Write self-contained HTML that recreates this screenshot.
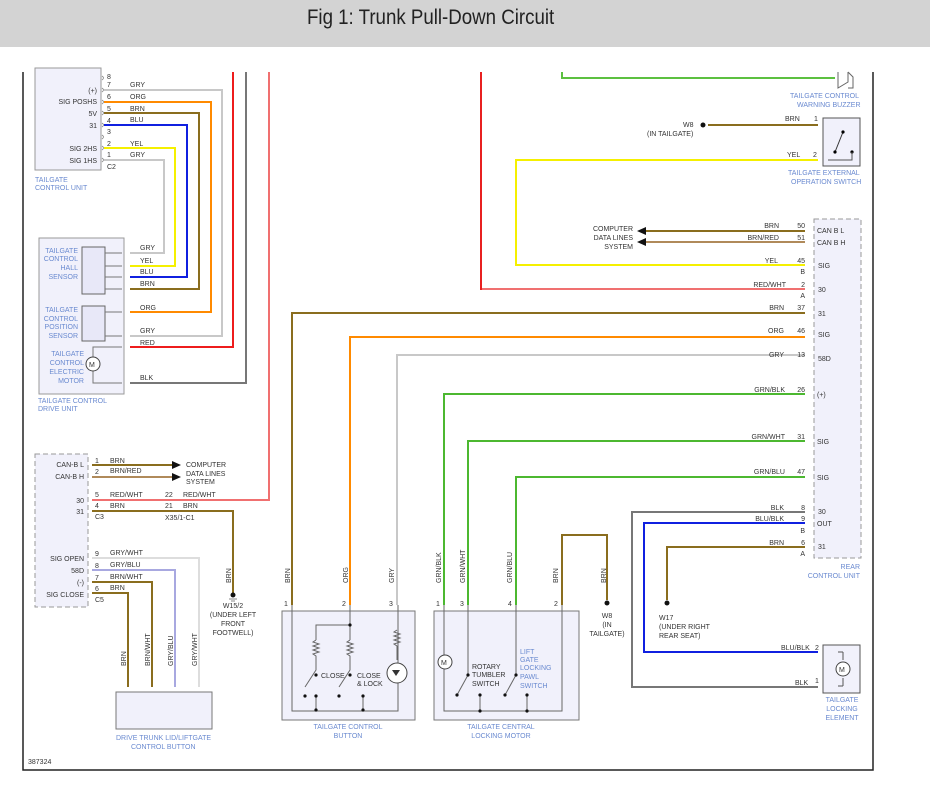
<!DOCTYPE html>
<html><head><meta charset="utf-8"><style>
html,body{margin:0;padding:0;background:#fff;width:930px;height:802px;overflow:hidden}
.hdr{position:absolute;left:0;top:0;width:930px;height:47px;background:#d3d3d3}
.hdr span{position:absolute;left:307px;top:6px;font:21px "Liberation Sans Narrow","Liberation Sans",sans-serif;color:#222;transform:scaleX(.89);transform-origin:left}
svg{position:absolute;left:0;top:0}
text{font-family:"Liberation Sans",sans-serif;font-size:7px;fill:#333}
.b{fill:#6a8ad0}
.w{fill:none;stroke-width:2}
.g{fill:none;stroke:#777;stroke-width:1}
</style></head><body>
<div class="hdr"><span>Fig 1: Trunk Pull-Down Circuit</span></div>
<svg width="930" height="802" viewBox="0 0 930 802">
<path d="M23 72V770H873V72" fill="none" stroke="#222" stroke-width="1.5"/>
<rect x="35" y="68" width="66" height="102" fill="#f1f1fb" stroke="#999"/>
<g text-anchor="end"><text x="97" y="93">(+)</text><text x="97" y="104">SIG POSHS</text><text x="97" y="116">5V</text><text x="97" y="128">31</text><text x="97" y="151">SIG 2HS</text><text x="97" y="163">SIG 1HS</text></g>
<g><text x="107" y="79">8</text><text x="107" y="87">7</text><text x="107" y="99">6</text><text x="107" y="111">5</text><text x="107" y="123">4</text><text x="107" y="134">3</text><text x="107" y="146">2</text><text x="107" y="157">1</text><text x="107" y="169">C2</text>
<text x="130" y="87">GRY</text><text x="130" y="99">ORG</text><text x="130" y="111">BRN</text><text x="130" y="122">BLU</text><text x="130" y="146">YEL</text><text x="130" y="157">GRY</text></g>
<g fill="none" stroke="#888" stroke-width=".8"><path d="M102 76q3 2 0 4M102 88q3 2 0 4M102 100q3 2 0 4M102 111q3 2 0 4M102 123q3 2 0 4M102 135q3 2 0 4M102 146q3 2 0 4M102 158q3 2 0 4"/></g>
<text class="b" x="35" y="182">TAILGATE</text><text class="b" x="35" y="190">CONTROL UNIT</text>
<path class="w" stroke="#c8c8c8" d="M104 90H222V336H130"/>
<path class="w" stroke="#ff8a00" d="M104 102H211V312H130"/>
<path class="w" stroke="#8a6d1e" d="M104 113H199V289H130"/>
<path class="w" stroke="#1020e0" d="M104 125H187V277H130"/>
<path class="w" stroke="#f5f000" d="M104 148H175V266H130"/>
<path class="w" stroke="#c8c8c8" d="M104 160H164V253H130"/>
<path class="w" stroke="#ee1c1c" d="M233 72V347H130"/>
<path class="w" stroke="#777" d="M246 72V383H130"/>
<path class="w" stroke="#f07070" d="M269 72V500H92"/>
<rect x="39" y="238" width="85" height="156" fill="#f1f1fb" stroke="#999"/>
<rect x="82" y="247" width="23" height="47" fill="#e8e8f8" stroke="#666"/>
<rect x="82" y="306" width="23" height="35" fill="#e8e8f8" stroke="#666"/>
<g class="g"><path d="M105 253H122M105 266H122M105 277H122M105 289H122M105 312H122M105 336H122M93 357V347H122M93 371V383H122"/></g>
<circle cx="93" cy="364" r="7" fill="#fff" stroke="#444"/><text x="89" y="367" font-size="8">M</text>
<g text-anchor="end" class="b"><text class="b" x="78" y="253">TAILGATE</text><text class="b" x="78" y="261">CONTROL</text><text class="b" x="78" y="270">HALL</text><text class="b" x="78" y="279">SENSOR</text>
<text class="b" x="78" y="312">TAILGATE</text><text class="b" x="78" y="321">CONTROL</text><text class="b" x="78" y="329">POSITION</text><text class="b" x="78" y="338">SENSOR</text>
<text class="b" x="84" y="356">TAILGATE</text><text class="b" x="84" y="365">CONTROL</text><text class="b" x="84" y="374">ELECTRIC</text><text class="b" x="84" y="383">MOTOR</text></g>
<g><text x="140" y="250">GRY</text><text x="140" y="263">YEL</text><text x="140" y="274">BLU</text><text x="140" y="286">BRN</text><text x="140" y="310">ORG</text><text x="140" y="333">GRY</text><text x="140" y="345">RED</text><text x="140" y="380">BLK</text></g>
<text class="b" x="38" y="403">TAILGATE CONTROL</text><text class="b" x="38" y="411">DRIVE UNIT</text>
<rect x="35" y="454" width="53" height="153" fill="#f1f1fb" stroke="#999" stroke-dasharray="5 3"/>
<g text-anchor="end"><text x="84" y="467">CAN-B L</text><text x="84" y="479">CAN-B H</text><text x="84" y="503">30</text><text x="84" y="514">31</text><text x="84" y="561">SIG OPEN</text><text x="84" y="573">58D</text><text x="84" y="585">(-)</text><text x="84" y="597">SIG CLOSE</text></g>
<g><text x="95" y="463">1</text><text x="95" y="474">2</text><text x="95" y="497">5</text><text x="95" y="508">4</text><text x="95" y="519">C3</text><text x="95" y="556">9</text><text x="95" y="568">8</text><text x="95" y="580">7</text><text x="95" y="591">6</text><text x="95" y="602">C5</text>
<text x="110" y="463">BRN</text><text x="110" y="473">BRN/RED</text><text x="110" y="497">RED/WHT</text><text x="110" y="508">BRN</text><text x="110" y="555">GRY/WHT</text><text x="110" y="567">GRY/BLU</text><text x="110" y="579">BRN/WHT</text><text x="110" y="590">BRN</text>
<text x="165" y="497">22</text><text x="165" y="508">21</text><text x="183" y="497">RED/WHT</text><text x="183" y="508">BRN</text><text x="165" y="520">X35/1-C1</text>
<text x="186" y="467">COMPUTER</text><text x="186" y="476">DATA LINES</text><text x="186" y="484">SYSTEM</text></g>
<path class="w" stroke="#8a6d1e" d="M92 465H172"/><path class="w" stroke="#b08a5a" d="M92 477H172"/>
<path d="M172 461L181 465L172 469ZM172 473L181 477L172 481Z" fill="#111"/>
<path class="w" stroke="#8a6d1e" d="M92 511H233V593"/>
<path class="w" stroke="#ddd" d="M92 558H199V687"/>
<path class="w" stroke="#a8a8e0" d="M92 570H175V687"/>
<path class="w" stroke="#8a6d1e" d="M92 582H152V687M92 593H128V687"/>
<circle cx="233" cy="595" r="2.5" fill="#111"/><path d="M229 599h8M231 601h4" stroke="#888"/>
<g text-anchor="middle"><text x="233" y="608">W15/2</text><text x="233" y="617">(UNDER LEFT</text><text x="233" y="626">FRONT</text><text x="233" y="635">FOOTWELL)</text></g>
<g font-size="7"><text transform="translate(231 583) rotate(-90)">BRN</text><text transform="translate(126 666) rotate(-90)">BRN</text><text transform="translate(150 666) rotate(-90)">BRN/WHT</text><text transform="translate(173 666) rotate(-90)">GRY/BLU</text><text transform="translate(197 666) rotate(-90)">GRY/WHT</text></g>
<rect x="116" y="692" width="96" height="37" fill="#f1f1fb" stroke="#777"/>
<text class="b" x="116" y="740">DRIVE TRUNK LID/LIFTGATE</text><text class="b" x="131" y="749">CONTROL BUTTON</text>
<text x="28" y="764">387324</text>
<path class="w" stroke="#5cc040" d="M562 72V78H835"/>
<path d="M838 72v16l10-6V72M848 72l5 5v11h-5" fill="none" stroke="#666"/>
<text class="b" x="790" y="98">TAILGATE CONTROL</text><text class="b" x="797" y="107">WARNING BUZZER</text>
<path class="w" stroke="#8a6d1e" d="M708 125H818"/><circle cx="703" cy="125" r="2.5" fill="#111"/>
<text x="683" y="127">W8</text><text x="647" y="136">(IN TAILGATE)</text><text x="785" y="121">BRN</text><text x="814" y="121">1</text>
<rect x="823" y="118" width="37" height="48" fill="#f1f1fb" stroke="#555"/>
<path d="M843 132l-8 20" stroke="#333"/><circle cx="843" cy="132" r="1.6"/><circle cx="835" cy="152" r="1.6"/><circle cx="852" cy="152" r="1.6"/><path d="M852 152v8h-24" fill="none" stroke="#555"/>
<path class="w" stroke="#f5f000" d="M818 160H516V265H805"/>
<text x="787" y="157">YEL</text><text x="813" y="157">2</text>
<text class="b" x="788" y="175">TAILGATE EXTERNAL</text><text class="b" x="791" y="184">OPERATION SWITCH</text>
<rect x="814" y="219" width="47" height="339" fill="#f1f1fb" stroke="#999" stroke-dasharray="5 3"/>
<path class="w" stroke="#8a6d1e" d="M805 231H645"/><path class="w" stroke="#b08a5a" d="M805 242H645"/>
<path d="M646 227L637 231L646 235ZM646 238L637 242L646 246Z" fill="#111"/>
<g text-anchor="end"><text x="633" y="231">COMPUTER</text><text x="633" y="240">DATA LINES</text><text x="633" y="249">SYSTEM</text></g>
<path class="w" stroke="#f07070" d="M805 289H481"/><path class="w" stroke="#e82020" d="M481 290V72"/>
<path class="w" stroke="#8a6d1e" d="M805 313H292V605"/>
<path class="w" stroke="#ff8a00" d="M805 337H350V605"/>
<path class="w" stroke="#c8c8c8" d="M805 355H397V605"/>
<path class="w" stroke="#4cb830" d="M805 394H444V605"/>
<path class="w" stroke="#4cb830" d="M805 441H468V605"/>
<path class="w" stroke="#4cb830" d="M805 477H516V605"/>
<path class="w" stroke="#777" d="M805 512H632V687H818"/>
<path class="w" stroke="#1020e0" d="M805 523H644V652H818"/>
<path class="w" stroke="#8a6d1e" d="M805 547H667V600M562 605V535H607V600"/>
<g text-anchor="end"><text x="779" y="228">BRN</text><text x="779" y="240">BRN/RED</text><text x="778" y="263">YEL</text><text x="786" y="287">RED/WHT</text><text x="784" y="310">BRN</text><text x="784" y="333">ORG</text><text x="784" y="357">GRY</text><text x="785" y="392">GRN/BLK</text><text x="785" y="439">GRN/WHT</text><text x="785" y="474">GRN/BLU</text><text x="784" y="510">BLK</text><text x="784" y="521">BLU/BLK</text><text x="784" y="545">BRN</text>
<text x="805" y="228">50</text><text x="805" y="240">51</text><text x="805" y="263">45</text><text x="805" y="274">B</text><text x="805" y="287">2</text><text x="805" y="298">A</text><text x="805" y="310">37</text><text x="805" y="333">46</text><text x="805" y="357">13</text><text x="805" y="392">26</text><text x="805" y="439">31</text><text x="805" y="474">47</text><text x="805" y="510">8</text><text x="805" y="521">9</text><text x="805" y="533">B</text><text x="805" y="545">6</text><text x="805" y="556">A</text></g>
<g><text x="817" y="233">CAN B L</text><text x="817" y="245">CAN B H</text><text x="818" y="268">SIG</text><text x="818" y="292">30</text><text x="818" y="316">31</text><text x="818" y="337">SIG</text><text x="818" y="361">58D</text><text x="817" y="397">(+)</text><text x="817" y="444">SIG</text><text x="817" y="480">SIG</text><text x="818" y="514">30</text><text x="817" y="526">OUT</text><text x="818" y="549">31</text></g>
<g text-anchor="end"><text class="b" x="860" y="569">REAR</text><text class="b" x="860" y="578">CONTROL UNIT</text></g>
<circle cx="607" cy="603" r="2.5" fill="#111"/><circle cx="667" cy="603" r="2.5" fill="#111"/>
<g text-anchor="middle"><text x="607" y="618">W8</text><text x="607" y="627">(IN</text><text x="607" y="636">TAILGATE)</text></g>
<text x="659" y="620">W17</text><text x="659" y="629">(UNDER RIGHT</text><text x="659" y="638">REAR SEAT)</text>
<g><text transform="translate(606 583) rotate(-90)">BRN</text><text transform="translate(558 583) rotate(-90)">BRN</text><text transform="translate(512 583) rotate(-90)">GRN/BLU</text><text transform="translate(465 583) rotate(-90)">GRN/WHT</text><text transform="translate(441 583) rotate(-90)">GRN/BLK</text><text transform="translate(394 583) rotate(-90)">GRY</text><text transform="translate(348 583) rotate(-90)">ORG</text><text transform="translate(290 583) rotate(-90)">BRN</text>
<text x="284" y="606">1</text><text x="342" y="606">2</text><text x="389" y="606">3</text><text x="436" y="606">1</text><text x="460" y="606">3</text><text x="508" y="606">4</text><text x="554" y="606">2</text></g>
<rect x="823" y="645" width="37" height="48" fill="#f1f1fb" stroke="#555"/>
<path d="M843 652v8M843 678v8M843 652h-5M843 686h-5" fill="none" stroke="#555"/><circle cx="843" cy="669" r="7" fill="#fff" stroke="#444"/><text x="839" y="672" font-size="8">M</text>
<text x="781" y="650">BLU/BLK</text><text x="815" y="650">2</text><text x="795" y="685">BLK</text><text x="815" y="683">1</text>
<g text-anchor="middle"><text class="b" x="842" y="702">TAILGATE</text><text class="b" x="842" y="711">LOCKING</text><text class="b" x="842" y="720">ELEMENT</text></g>
<rect x="282" y="611" width="133" height="109" fill="#f1f1fb" stroke="#777"/>
<g fill="none" stroke="#666"><path d="M292 605V711H398V605M316 710V696M363 710V696M350 605V625H316V640M350 625V640"/>
<path d="M316 640l-3 2 6 2-6 2 6 2-6 2 6 2-6 2 3 2v14l-11 17M350 640l-3 2 6 2-6 2 6 2-6 2 6 2-6 2 3 2v14l-11 17M397 630l-3 2 6 2-6 2 6 2-6 2 6 2-6 2 3 2v14"/></g>
<circle cx="397" cy="673" r="10" fill="#fff" stroke="#444"/><path d="M392 670h8l-4 6z" fill="#333"/>
<g fill="#111"><circle cx="316" cy="675" r="1.6"/><circle cx="305" cy="696" r="1.6"/><circle cx="316" cy="696" r="1.6"/><circle cx="350" cy="675" r="1.6"/><circle cx="339" cy="696" r="1.6"/><circle cx="363" cy="696" r="1.6"/><circle cx="316" cy="710" r="1.6"/><circle cx="363" cy="710" r="1.6"/><circle cx="350" cy="625" r="1.6"/></g>
<text x="321" y="678">CLOSE</text><text x="357" y="678">CLOSE</text><text x="357" y="686">&amp; LOCK</text>
<g text-anchor="middle"><text class="b" x="348" y="729">TAILGATE CONTROL</text><text class="b" x="348" y="738">BUTTON</text></g>
<rect x="434" y="611" width="145" height="109" fill="#f1f1fb" stroke="#777"/>
<g fill="none" stroke="#666"><path d="M444 605V711H562V605M468 605V675l-11 20M516 605V675l-11 20M480 711V695M527 711V695"/></g>
<circle cx="445" cy="662" r="7" fill="#fff" stroke="#444"/><text x="441" y="665" font-size="8">M</text>
<g fill="#111"><circle cx="468" cy="675" r="1.6"/><circle cx="457" cy="695" r="1.6"/><circle cx="480" cy="695" r="1.6"/><circle cx="516" cy="675" r="1.6"/><circle cx="505" cy="695" r="1.6"/><circle cx="527" cy="695" r="1.6"/><circle cx="480" cy="711" r="1.6"/><circle cx="527" cy="711" r="1.6"/></g>
<text x="472" y="669">ROTARY</text><text x="472" y="677">TUMBLER</text><text x="472" y="686">SWITCH</text>
<text class="b" x="520" y="654">LIFT</text><text class="b" x="520" y="662">GATE</text><text class="b" x="520" y="670">LOCKING</text><text class="b" x="520" y="679">PAWL</text><text class="b" x="520" y="688">SWITCH</text>
<g text-anchor="middle"><text class="b" x="501" y="729">TAILGATE CENTRAL</text><text class="b" x="501" y="738">LOCKING MOTOR</text></g>
</svg>
</body></html>
